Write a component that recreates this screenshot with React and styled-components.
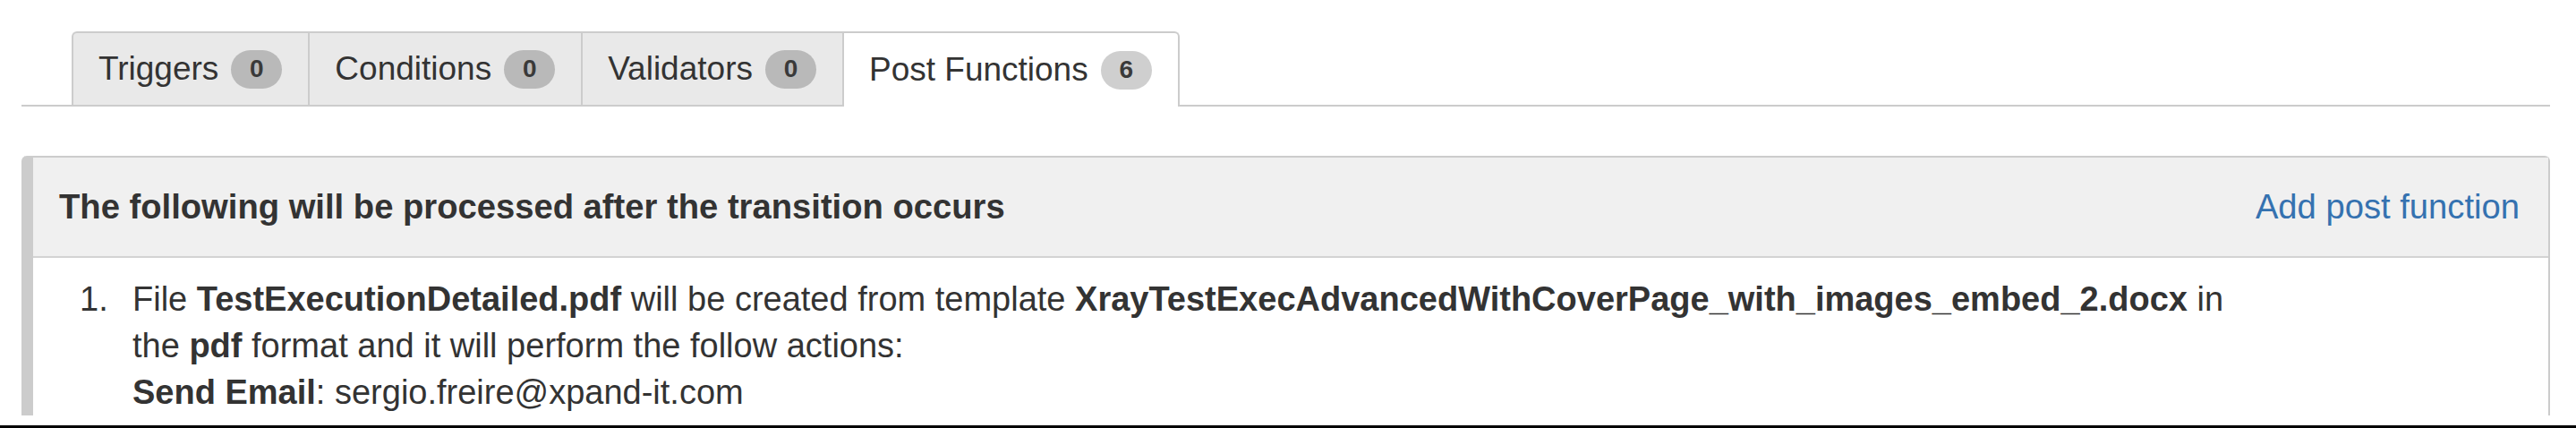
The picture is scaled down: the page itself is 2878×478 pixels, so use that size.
import React from 'react';
import styled, { createGlobalStyle } from 'styled-components';

const GlobalStyle = createGlobalStyle`
  html, body { margin: 0; padding: 0; background: #fff; }
  body {
    font-family: "Liberation Sans", Arial, Helvetica, sans-serif;
    color: #333;
  }
`;

const Page = styled.div`
  height: 478px;
  box-sizing: border-box;
  padding: 35px 29px 0 24px;
  border-bottom: 3px solid #000;
  overflow: hidden;
`;

const TabBar = styled.ul`
  display: flex;
  align-items: flex-end;
  list-style: none;
  margin: 0;
  padding: 0 0 0 56px;
  height: 82px;
  border-bottom: 2px solid #ccc;
`;

const Tab = styled.li`
  display: flex;
  align-items: center;
  box-sizing: border-box;
  height: ${(p) => (p.$active ? '84px' : '82px')};
  margin-bottom: ${(p) => (p.$active ? '-2px' : '0')};
  padding: 0 29px 0 28px;
  background: ${(p) => (p.$active ? '#fff' : '#e9e9e9')};
  border-top: 2px solid #ccc;
  border-left: 2px solid #ccc;
  border-right: ${(p) => (p.$active ? '2px solid #ccc' : 'none')};
  border-radius: ${(p) => (p.$first ? '6px 0 0 0' : p.$active ? '0 6px 0 0' : '0')};
  font-size: 37px;
  color: #333;
  white-space: nowrap;
`;

const Badge = styled.span`
  display: inline-flex;
  align-items: center;
  justify-content: center;
  margin-left: 14px;
  min-width: 57px;
  height: 43px;
  border-radius: 22px;
  background: ${(p) => (p.$active ? '#cfcfcf' : '#b9b9b9')};
  font-size: 28px;
  font-weight: bold;
  color: #3a3a3a;
`;

const Panel = styled.section`
  margin-top: 55px;
  border: 2px solid #ccc;
  border-left-width: 13px;
  border-bottom: none;
  border-radius: 6px 6px 0 0;
`;

const PanelHeader = styled.header`
  display: flex;
  align-items: center;
  justify-content: space-between;
  height: 110px;
  padding: 0 32px 0 29px;
  background: #f0f0f0;
  border-bottom: 2px solid #d3d3d3;
`;

const Title = styled.h3`
  margin: 0;
  font-size: 38.2px;
  font-weight: bold;
  color: #333;
`;

const AddLink = styled.a`
  font-size: 38.2px;
  color: #3572b0;
  text-decoration: none;
  cursor: pointer;
`;

const FunctionList = styled.ol`
  list-style: none;
  margin: 0;
  padding: 20px 32px 0 52px;
`;

const FunctionItem = styled.li`
  display: grid;
  grid-template-columns: 59px 1fr;
  font-size: 38px;
  line-height: 52px;
  color: #333;
`;

const Marker = styled.span``;

const tabs = [
  { label: 'Triggers', count: 0 },
  { label: 'Conditions', count: 0 },
  { label: 'Validators', count: 0 },
  { label: 'Post Functions', count: 6, active: true },
];

export default function App() {
  return (
    <>
      <GlobalStyle />
      <Page>
        <TabBar>
          {tabs.map((t, i) => (
            <Tab key={t.label} $active={t.active} $first={i === 0}>
              {t.label}
              <Badge $active={t.active}>{t.count}</Badge>
            </Tab>
          ))}
        </TabBar>
        <Panel>
          <PanelHeader>
            <Title>The following will be processed after the transition occurs</Title>
            <AddLink>Add post function</AddLink>
          </PanelHeader>
          <FunctionList>
            <FunctionItem>
              <Marker>1.</Marker>
              <div>
                File <b>TestExecutionDetailed.pdf</b> will be created from template{' '}
                <b>XrayTestExecAdvancedWithCoverPage_with_images_embed_2.docx</b> in
                <br />
                the <b>pdf</b> format and it will perform the follow actions:
                <br />
                <b>Send Email</b>: sergio.freire@xpand-it.com
              </div>
            </FunctionItem>
          </FunctionList>
        </Panel>
      </Page>
    </>
  );
}
